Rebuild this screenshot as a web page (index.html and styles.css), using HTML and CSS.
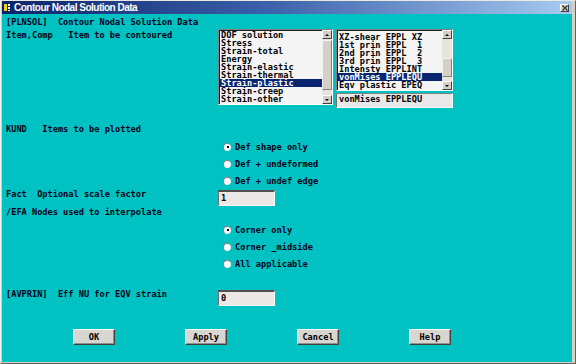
FILE: index.html
```html
<!DOCTYPE html>
<html lang="en">
<head>
<meta charset="UTF-8" />
<title>Contour Nodal Solution Data</title>
<link rel="stylesheet" href="styles.css">
</head>
<body>
  <div class="window">
    <div class="titlebar">
      <svg class="app-icon" width="7" height="9" viewBox="0 0 7 9">
        <rect x="0" y="1" width="3" height="7" fill="#f0d000" />
        <rect x="4" y="1" width="2" height="2" fill="#ffffff" />
        <rect x="4" y="4" width="2" height="2" fill="#ffffff" />
        <rect x="4" y="7" width="2" height="1" fill="#ffffff" />
      </svg>
      <span class="title">Contour Nodal Solution Data</span>
      <span class="close-btn">
        <svg width="6" height="6" viewBox="0 0 6 6"><path d="M0.5 0.5 L5.5 5.5 M5.5 0.5 L0.5 5.5" stroke="#333" stroke-width="1.2" /></svg>
      </span>
    </div>

    <div class="client">
      <div class="line head">[PLNSOL]  Contour Nodal Solution Data</div>

      <div class="row item-row">
        <div class="label">Item,Comp   Item to be contoured</div>
        <div class="lists">
          <div class="listbox list-left">
            <ul class="items">
              <li>DOF solution</li>
              <li>Stress</li>
              <li>Strain-total</li>
              <li>Energy</li>
              <li>Strain-elastic</li>
              <li>Strain-thermal</li>
              <li class="selected">Strain-plastic</li>
              <li>Strain-creep</li>
              <li>Strain-other</li>
            </ul>
            <div class="scrollbar">
              <span class="arrow up"></span>
              <span class="track"><span class="thumb thumb-left"></span></span>
              <span class="arrow down"></span>
            </div>
          </div>
          <div class="right-col">
            <div class="listbox list-right">
              <ul class="items">
                <li>XZ-shear EPPL XZ</li>
                <li>1st prin EPPL  1</li>
                <li>2nd prin EPPL  2</li>
                <li>3rd prin EPPL  3</li>
                <li>Intensty EPPLINT</li>
                <li class="selected">vonMises EPPLEQU</li>
                <li>Eqv plastic EPEQ</li>
              </ul>
              <div class="scrollbar">
                <span class="arrow up"></span>
                <span class="track"><span class="thumb thumb-right"></span></span>
                <span class="arrow down"></span>
              </div>
            </div>
            <div class="field field-wide">vonMises EPPLEQU</div>
          </div>
        </div>
      </div>

      <div class="line kund">KUND   Items to be plotted</div>
      <div class="radios radios-kund">
        <div class="radio on"><span class="dot"></span><span class="txt">Def shape only</span></div>
        <div class="radio"><span class="dot"></span><span class="txt">Def + undeformed</span></div>
        <div class="radio"><span class="dot"></span><span class="txt">Def + undef edge</span></div>
      </div>

      <div class="row fact-row">
        <div class="label">Fact  Optional scale factor</div>
        <div class="field">1</div>
      </div>

      <div class="line efa">/EFA Nodes used to interpolate</div>
      <div class="radios">
        <div class="radio on"><span class="dot"></span><span class="txt">Corner only</span></div>
        <div class="radio"><span class="dot"></span><span class="txt">Corner _midside</span></div>
        <div class="radio"><span class="dot"></span><span class="txt">All applicable</span></div>
      </div>

      <div class="row avprin-row">
        <div class="label">[AVPRIN]  Eff NU for EQV strain</div>
        <div class="field">0</div>
      </div>

      <div class="buttons">
        <button class="btn">OK</button>
        <button class="btn">Apply</button>
        <button class="btn">Cancel</button>
        <button class="btn">Help</button>
      </div>
    </div>
  </div>
</body>
</html>
```

FILE: styles.css
```css
* {
  box-sizing: border-box;
}
body {
  margin: 0;
  background: #ffffff;
}
.window {
  width: 576px;
  height: 364px;
  background-color: #d4d0c8;
  border-top: 1px solid #ece9e0;
  border-left: 1px solid #f4f2ee;
  border-right: 1px solid #606060;
  border-bottom: 1px solid #606060;
  padding: 0 3px 1px 1px;
  display: flex;
  flex-direction: column;
}
.titlebar {
  height: 13px;
  flex-shrink: 0;
  background: linear-gradient(to right, #0a246a, #3a5ea8 45%, #a6caf0);
  display: flex;
  align-items: center;
  padding: 0 2px 0 2px;
  color: white;
}
.app-icon {
  margin-right: 3px;
}
.title {
  font-family: 'Liberation Sans', Arial, sans-serif;
  font-weight: bold;
  font-size: 10px;
  letter-spacing: -0.5px;
  line-height: 13px;
  flex-grow: 1;
}
.close-btn {
  width: 9px;
  height: 8px;
  background-color: #d4d0c8;
  border-top: 1px solid #fff;
  border-left: 1px solid #fff;
  border-right: 1px solid #404040;
  border-bottom: 1px solid #404040;
  display: flex;
  align-items: center;
  justify-content: center;
  margin-right: 1px;
}

/* area teal do dialogo */
.client {
  flex-grow: 1;
  background-color: #00c2c2;
  border-right: 1px solid #20b0b0;
  padding: 4px 0 0 4px;
  font-family: 'DejaVu Sans Mono', 'Liberation Mono', monospace;
  font-weight: bold;
  font-size: 8.65px;
  line-height: 8px;
  color: #00001a;
}
.line,
.label,
.items li,
.txt,
.field {
  white-space: pre;
}
.line {
  height: 8px;
}
.row {
  display: grid;
  grid-template-columns: 212px auto;
  align-items: start;
}
.item-row {
  margin-top: 3px;
}
.item-row .label {
  padding-top: 2px;
}
.lists {
  display: flex;
  gap: 3px;
}

/* listas */
.listbox {
  display: flex;
  background-color: #f4f4f4;
  border-top: 1px solid #808080;
  border-left: 1px solid #808080;
  border-right: 1px solid #ffffff;
  border-bottom: 1px solid #ffffff;
  box-shadow: inset 1px 1px 0 #202020;
}
.list-left {
  width: 115px;
  height: 76px;
}
.list-right {
  width: 117px;
  height: 62px;
}
.items {
  list-style: none;
  margin: 0;
  padding: 1px 0 0 1px;
  flex-grow: 1;
  color: #000;
}
.list-right .items {
  padding-top: 3px;
}
.items li {
  height: 8px;
  padding-left: 1px;
}
.items li.selected {
  background-color: #0a2470;
  color: white;
}
.scrollbar {
  width: 10px;
  display: flex;
  flex-direction: column;
  flex-shrink: 0;
}
.arrow {
  height: 9px;
  background-color: #d4d0c8;
  border-top: 1px solid #fff;
  border-left: 1px solid #fff;
  border-right: 1px solid #404040;
  border-bottom: 1px solid #404040;
  display: flex;
  align-items: center;
  justify-content: center;
}
.arrow::after {
  content: '';
  border-left: 2px solid transparent;
  border-right: 2px solid transparent;
}
.arrow.up::after {
  border-bottom: 2px solid #000;
}
.arrow.down::after {
  border-top: 2px solid #000;
}
.track {
  flex-grow: 1;
  background-color: #e6e4de;
  display: flex;
  flex-direction: column;
}
.thumb {
  background-color: #d4d0c8;
  border-top: 1px solid #f4f2ee;
  border-left: 1px solid #f4f2ee;
  border-right: 1px solid #808080;
  border-bottom: 1px solid #808080;
}
.thumb-left {
  margin-top: 1px;
  height: 50px;
}
.thumb-right {
  margin-top: 19px;
  height: 19px;
}
.right-col {
  display: flex;
  flex-direction: column;
  gap: 2px;
}

/* campos de texto */
.field {
  width: 57px;
  height: 16px;
  background-color: #ece8e6;
  border-top: 2px solid #505050;
  border-left: 1px solid #707070;
  border-right: 1px solid #f8f8f8;
  border-bottom: 1px solid #f8f8f8;
  padding: 2px 0 0 2px;
  color: #000;
}
.field-wide {
  width: 117px;
  height: 15px;
  background-color: #e8e8e8;
  border-top: 1px solid #808080;
  padding-top: 1px;
}

.kund {
  margin-top: 17px;
}
.radios {
  margin-left: 214px;
  margin-top: 5px;
}
.radio {
  height: 17px;
  display: flex;
  align-items: center;
  padding-left: 3px;
}
.dot {
  width: 8px;
  height: 8px;
  border-radius: 50%;
  background-color: #ffffff;
  border-top: 1px solid #808080;
  border-left: 1px solid #808080;
  margin-right: 4px;
  display: flex;
  align-items: center;
  justify-content: center;
}
.radio.on .dot::after {
  content: '';
  width: 2px;
  height: 2px;
  background-color: #000;
}
.fact-row {
  margin-top: 1px;
}
.efa {
  margin-top: 2px;
}
.avprin-row {
  margin-top: 18px;
}

/* botoes */
.buttons {
  display: flex;
  gap: 70px;
  padding-left: 67px;
  margin-top: 23px;
}
.btn {
  width: 42px;
  height: 16px;
  padding: 0;
  font-family: 'DejaVu Sans Mono', 'Liberation Mono', monospace;
  font-weight: bold;
  font-size: 8.65px;
  color: #000;
  background-color: #d8d6d0;
  border-top: 1px solid #ffffff;
  border-left: 1px solid #ffffff;
  border-right: 1px solid #404040;
  border-bottom: 1px solid #404040;
  box-shadow: inset -1px -1px 0 #909090;
}
```
